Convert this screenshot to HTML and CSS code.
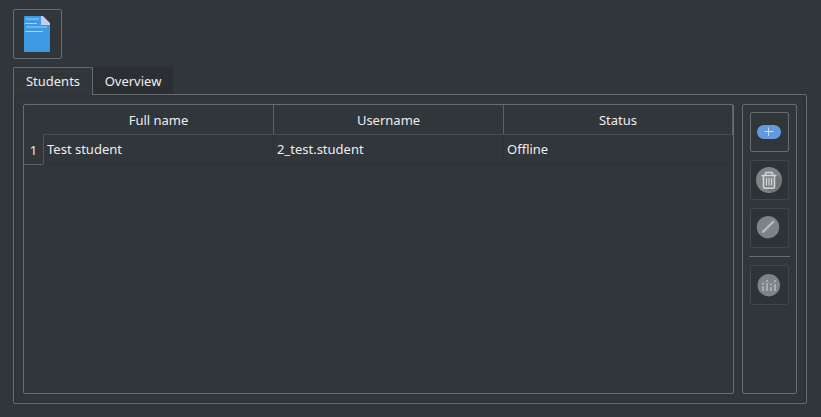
FILE: index.html
```html
<!DOCTYPE html>
<html lang="en">
<head>
<meta charset="utf-8">
<title>Students</title>
<link rel="stylesheet" href="styles.css">
</head>
<body>
<button class="doc-button" aria-label="Document">
<svg width="26" height="36" viewBox="0 0 26 36">
<path fill="#3d9ae2" d="M1 0H17L26 9V35Q26 36 25 36H1Q0 36 0 35V1Q0 0 1 0Z"/>
<path fill="#c9cbf5" d="M17 0H19L26 7V9H17Z"/>
<path stroke="#6fb4eb" stroke-width="2" d="M2 3H15M2 11H23"/>
<path stroke="#a5d4f6" d="M1 7.5H13M1 15.5H19"/>
</svg>
</button>
<nav class="tabs">
<div class="tab active">Students</div>
<div class="tab">Overview</div>
</nav>
<main class="pane">
<section class="table">
<div class="row head"><div class="corner"></div><div class="cell">Full name</div><div class="cell">Username</div><div class="cell">Status</div></div>
<div class="row"><div class="index">1</div><div class="cell">Test student</div><div class="cell">2_test.student</div><div class="cell">Offline</div></div>
</section>
<aside class="tools">
<button class="tool enabled" aria-label="Add">
<svg width="37" height="38" viewBox="0 0 37 38"><rect x="6" y="12" width="24" height="14" rx="7" fill="#6499db"/><path stroke="#c6dcf5" d="M13.5 18.5H22.5M17.5 14.5V23"/></svg>
</button>
<button class="tool" aria-label="Delete">
<svg width="37" height="38" viewBox="0 0 37 38"><circle cx="18" cy="19" r="13" fill="#7e8387"/><path fill="#6e7377" d="M26 14L30.4 18A13 13 0 0 1 21 31L12 27Z"/><path fill="#7e8387" d="M12 15H24V27H12Z"/><g fill="none" stroke="#d3d5d6"><path stroke-width="1.5" d="M10.5 14.5H25.5M14.5 14V12.2Q14.5 11.5 15.5 11.5H20.5Q21.5 11.5 21.5 12.2V14M12.5 15V26Q12.5 27.3 14 27.3H22Q23.5 27.3 23.5 26V15"/><path stroke-width="1.2" d="M15.5 17V24.5M18 17V24.5M20.5 17V24.5"/></g></svg>
</button>
<button class="tool" aria-label="Edit">
<svg width="37" height="38" viewBox="0 0 37 38"><circle cx="17" cy="18.2" r="11.2" fill="#7e8387"/><path stroke="#b9bcbe" stroke-width="2.3" stroke-linecap="round" d="M12.2 22.8L22.3 12.7"/></svg>
</button>
<div class="separator"></div>
<button class="tool" aria-label="Statistics">
<svg width="37" height="38" viewBox="0 0 37 38"><circle cx="17.8" cy="19.2" r="11.2" fill="#7e8387"/><path fill="#a9adaf" d="M11 20h2v5h-2zM15 17h2v8h-2zM19 21h2v4h-2zM23 18h2v7h-2z"/><path fill="none" stroke="#92969a" stroke-width="1" d="M12 18L16 15L20 18.5L24 15"/><g fill="#b5b8ba"><circle cx="12" cy="17.7" r="1"/><circle cx="16" cy="15" r="1"/><circle cx="20" cy="18.5" r="1"/><circle cx="24" cy="15" r="1"/></g></svg>
</button>
</aside>
</main>
</body>
</html>
```
FILE: styles.css
```css
* { box-sizing: border-box; }
body {
  margin: 0;
  padding: 9px 14px 13px 13px;
  height: 417px;
  overflow: hidden;
  background: #31363a;
  color: #eceeef;
  font: 13px/18px "Noto Sans", sans-serif;
}
svg { display: block; }
button { padding: 0; background: transparent; font: inherit; }
.doc-button {
  display: flex;
  width: 49px;
  height: 50px;
  padding: 6px 0 0 10px;
  border: 1px solid #686c6f;
  border-radius: 2px;
}
.tabs { display: flex; height: 28px; margin-top: 8px; }
.tab {
  height: 27px;
  width: 80px;
  padding-top: 5px;
  text-align: center;
  background: #2b2e32;
  border-radius: 0 3px 0 0;
}
.tab.active {
  position: relative;
  height: 28px;
  padding-top: 4px;
  background: #31363a;
  border: 1px solid #686c6f;
  border-bottom: 0;
  border-radius: 2px 2px 0 0;
}
.pane {
  display: flex;
  gap: 8px;
  height: 310px;
  margin-top: -1px;
  padding: 9px;
  border: 1px solid #686c6f;
  border-radius: 0 2px 2px 2px;
  box-shadow: inset 0 0 0 2px #2e3236;
}
.table {
  width: 711px;
  height: 290px;
  border: 1px solid #686c6f;
  border-radius: 2px;
}
.row {
  display: grid;
  grid-template-columns: 19px 230px 230px 230px;
  height: 30px;
}
.row .cell { padding: 5px 0 0 3px; border-left: 1px solid #2d3135; border-bottom: 1px solid #2d3135; }
.row .cell:nth-child(2) { border-left-color: #515558; }
.row.head .cell { padding: 6px 0 0; text-align: center; border-left-color: #5d6164; border-bottom-color: #484c4f; }
.row.head .cell:nth-child(2) { border-left-color: transparent; }
.row.head .cell:last-child { border-right: 1px solid #5d6164; }
.index { padding-top: 6px; text-align: center; border-bottom: 1px solid #5d6164; }
.tools {
  display: flex;
  flex-direction: column;
  gap: 8px;
  width: 55px;
  height: 290px;
  padding: 7px;
  border: 1px solid #686c6f;
  border-radius: 2px;
}
.tool { width: 39px; height: 40px; border: 1px solid #414548; border-radius: 2px; flex: none; background: #2e3337; }
.tool.enabled { border-color: #686c6f; background: #31363a; }
.separator { height: 1px; margin: 0 -1px; background: #686c6f; }
```
